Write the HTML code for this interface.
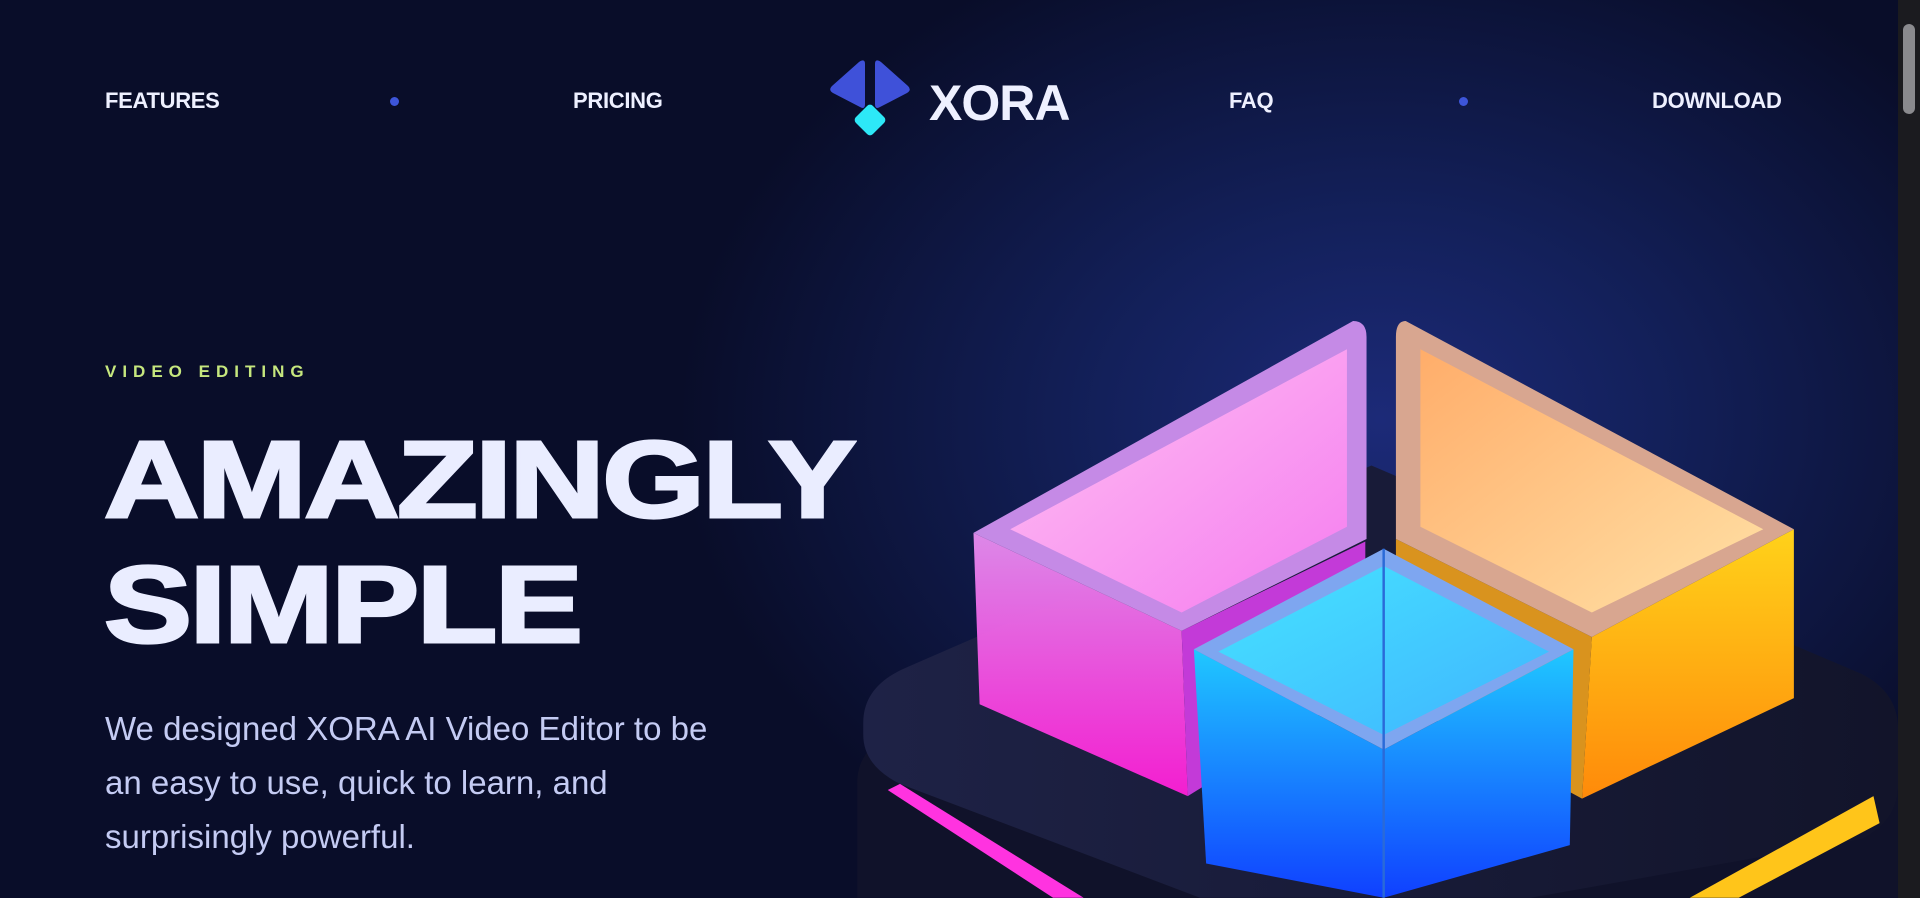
<!DOCTYPE html>
<html><head><meta charset="utf-8"><style>
*{margin:0;padding:0;box-sizing:border-box}
html,body{width:1920px;height:898px;overflow:hidden}
body{background:#090d29;font-family:"Liberation Sans",sans-serif;position:relative}
.bg{position:absolute;inset:0;background:radial-gradient(ellipse 700px 520px at 1380px 420px,#1c2a78 0%,#13205a 40%,rgba(9,13,41,0) 100%)}
.nav a{position:absolute;top:88px;color:#eef0ff;font-weight:700;font-size:22px;letter-spacing:-0.3px;text-decoration:none}
.dot{position:absolute;top:97px;width:9px;height:9px;border-radius:50%;background:#3d55d9}
.logo{position:absolute;left:827px;top:58px}
.xora{position:absolute;left:929px;top:74px;font-weight:700;font-size:50px;color:#eef0ff;letter-spacing:-1px}
.tag{position:absolute;left:105px;top:362px;font-size:17px;font-weight:700;letter-spacing:6px;color:#c6e77e}
h1{position:absolute;left:104px;top:418px;font-size:109px;line-height:125px;font-weight:900;color:#eaedff;letter-spacing:-2px;-webkit-text-stroke:3px #eaedff;transform:scaleX(1.21);transform-origin:left top;white-space:nowrap}
p{position:absolute;left:105px;top:702px;width:620px;font-size:33px;line-height:54px;color:#c4cbf3}
.sb{position:absolute;right:0;top:0;width:22px;height:898px;background:#1b1b1f}
.sb i{position:absolute;left:5px;top:24px;width:12px;height:90px;border-radius:6px;background:#8a8a8e}
</style></head><body>
<div class="bg"></div>
<svg style="position:absolute;left:0;top:0" width="1920" height="898" viewBox="0 0 1568 733">
<defs>
<linearGradient id="pk" x1="0" y1="0" x2="1" y2="1"><stop offset="0" stop-color="#ffc2f2"/><stop offset="1" stop-color="#f57cf0"/></linearGradient>
<linearGradient id="pks" x1="0" y1="0" x2="0" y2="1"><stop offset="0" stop-color="#e78ef0"/><stop offset="1" stop-color="#ff1ed8"/></linearGradient>
<linearGradient id="or" x1="0" y1="0" x2="1" y2="1"><stop offset="0" stop-color="#ffad6a"/><stop offset="1" stop-color="#ffe1a6"/></linearGradient>
<linearGradient id="ors" x1="0" y1="0" x2="0" y2="1"><stop offset="0" stop-color="#ffd21a"/><stop offset="1" stop-color="#ff8a0a"/></linearGradient>
<linearGradient id="bl" x1="0" y1="0" x2="1" y2="1"><stop offset="0" stop-color="#46e3ff"/><stop offset="1" stop-color="#3fb4ff"/></linearGradient>
<linearGradient id="bls" x1="0" y1="0" x2="0" y2="1"><stop offset="0" stop-color="#20c8ff"/><stop offset="1" stop-color="#1040ff"/></linearGradient>
<linearGradient id="pl" x1="0" y1="0" x2="1" y2="0"><stop offset="0" stop-color="#1e2246"/><stop offset="1" stop-color="#12142a"/></linearGradient>
</defs>
<path d="M700,640 Q700,610 730,600 L1120,460 L1530,600 Q1550,610 1550,640 L1550,733 L700,733 Z" fill="#10122a"/>
<path d="M705,590 Q705,560 740,545 L1120,380 L1520,550 Q1550,565 1550,595 L1550,640 Q1550,670 1520,685 L1250,733 L980,733 L735,640 Q705,625 705,600 Z" fill="url(#pl)"/>
<path d="M725,645 L735,640 L885,733 L860,733 Z" fill="#ff33e0"/>
<path d="M1530,650 L1535,672 L1420,733 L1380,733 Z" fill="#ffc51a"/>
<path d="M795,435 L965,515 L970,650 L800,575 Z" fill="url(#pks)" opacity=".95"/>
<path d="M965,515 L1115,442 L1115,560 L970,650 Z" fill="#c33ad8"/>
<path d="M1105,262 Q1116,262 1116,275 L1116,440 L965,515 L795,435 Z" fill="#c58ae6"/>
<path d="M1100,285 L1100,430 L965,500 L825,432 Z" fill="url(#pk)"/>
<path d="M1300,520 L1465,432 L1465,570 L1292,652 Z" fill="url(#ors)"/>
<path d="M1140,440 L1300,520 L1292,652 L1140,570 Z" fill="#d9931e"/>
<path d="M1148,262 Q1140,262 1140,275 L1140,440 L1300,520 L1465,432 Z" fill="#d8a690"/>
<path d="M1160,285 L1160,430 L1300,500 L1440,432 Z" fill="url(#or)"/>
<path d="M975,530 L1130,612 L1130,733 L985,705 Z" fill="url(#bls)"/>
<path d="M1130,612 L1285,530 L1282,690 L1130,733 Z" fill="url(#bls)"/>
<path d="M1130,448 L1285,530 L1130,612 L975,530 Z" fill="#7ea6f0"/>
<path d="M1130,462 L1265,532 L1130,600 L995,532 Z" fill="url(#bl)"/>
<path d="M1130,448 L1130,733" stroke="#2a6ad8" stroke-width="2"/>
</svg>
<div class="nav">
<a style="left:105px">FEATURES</a>
<span class="dot" style="left:390px"></span>
<a style="left:573px">PRICING</a>
<a style="left:1229px">FAQ</a>
<span class="dot" style="left:1459px"></span>
<a style="left:1652px">DOWNLOAD</a>
</div>
<svg class="logo" width="86" height="86" viewBox="0 0 86 86">
<path d="M38,6 L38,46 Q38,52 33,49 L6,35 Q1,32 5,28 L32,4 Q38,0 38,6Z" fill="#3f51d9"/>
<path d="M48,6 L48,46 Q48,52 53,49 L80,35 Q85,32 81,28 L54,4 Q48,0 48,6Z" fill="#3f51d9"/>
<rect x="31" y="50" width="24" height="24" rx="4" transform="rotate(45 43 62)" fill="#2de8f7"/>
</svg>
<div class="xora">XORA</div>
<div class="tag">VIDEO EDITING</div>
<h1>AMAZINGLY<br>SIMPLE</h1>
<p>We designed XORA AI Video Editor to be an easy to use, quick to learn, and surprisingly powerful.</p>
<div class="sb"><i></i></div>
</body></html>
